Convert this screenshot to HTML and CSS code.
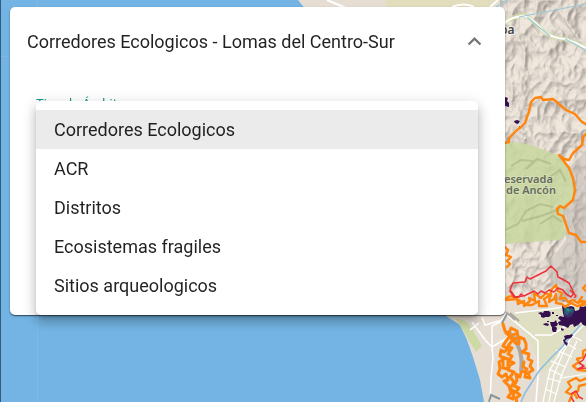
FILE: index.html
```html
<!DOCTYPE html>
<html lang="es">
<head>
<meta charset="utf-8">
<meta name="viewport" content="width=device-width, initial-scale=1">
<title>Corredores Ecologicos</title>
<link rel="stylesheet" href="styles.css">
</head>
<body>
<svg class="map" viewBox="0 0 586 402" preserveAspectRatio="xMinYMin slice" aria-hidden="true">
  <defs>
    <filter id="relief" x="0" y="0" width="100%" height="100%" color-interpolation-filters="sRGB">
      <feTurbulence type="turbulence" baseFrequency="0.04 0.03" numOctaves="3" seed="5"/>
      <feColorMatrix type="matrix" values="0 0 0 0 0  0 0 0 0 0  0 0 0 0 0  -1 0 0 0 1"/>
      <feDiffuseLighting surfaceScale="6" diffuseConstant="1.1" lighting-color="#ece3d9">
        <feDistantLight azimuth="225" elevation="62"/>
      </feDiffuseLighting>
      <feComposite operator="in" in2="SourceGraphic"/>
    </filter>
    <clipPath id="reserve-area"><path d="M505 141L528 144 560 156 569 168 574 185 573 200 563 210 564 225 566 240 505 244Z"/></clipPath>
  </defs>
  <rect width="586" height="402" fill="#73b4e4"/>
  <path d="M298 0L306 10 446 300 446 316 460 325 467 340 473 357 480 380 484 402H586V0Z" fill="#e6ddd3"/>
  <path d="M386 0H500L486 12H386Z" fill="#e2ddbd"/>
  <g filter="url(#relief)" opacity=".42"><path d="M500 0H586V304L545 300 505 296Z" fill="#fff"/></g>
  <path d="M569 168L586 150V300H560L545 268 566 240 563 210 574 200Z" fill="#b5b0aa" opacity=".4"/>
  <path d="M505 141L528 144 560 156 569 168 574 185 573 200 563 210 564 225 566 234 560 240 505 244Z" fill="#c8d79e" opacity=".85"/>
  <g fill="none" stroke="#a5af80" opacity=".55" clip-path="url(#reserve-area)">
    <path stroke-width="2" d="M505 230L518 224 526 211 540 204 553 207M522 221L541 216 560 209M540 224L553 216 562 222M511 166L521 160 533 161M526 169L537 159 551 164M548 178L560 170 566 182"/>
  </g>
  <path d="M505 22Q514 16 525 15Q534 21 543 31Q552 38 565 39Q577 43 586 48" fill="none" stroke="#d7ddae" stroke-width="5" opacity=".7"/>
  <path d="M503 24Q512 16 525 16Q534 20 543 31Q552 38 565 39Q577 43 586 48" fill="none" stroke="#fff" stroke-width="2"/>
  <path d="M496 7L508 0M519 17L545 12 586 4M527 17L540 28 550 36M565 39L577 45 586 51" fill="none" stroke="#9cc8d5" stroke-width="1.2"/>
  <path d="M327 0L346 8M452 7Q464 2 474 7M490 7L498 0" fill="none" stroke="#fff" stroke-width="2"/>
  <path d="M516 313L540 309 586 304V331L568 364 544 376 530 341 512 319Z" fill="#dedfc3"/>
  <path d="M456 319Q468 318 475 334L482 346 476 352Z" fill="#cddaa5"/>
  <path d="M543 402V376L565 344 586 328V402Z" fill="#e4e0d0"/>
  <g fill="none" stroke="#fff" stroke-width="1.6">
    <path d="M472 322L477 329 486 341 492 347 493 358 491 378 490 402M492 347L509 337M482 317L485 325 502 320 506 314M470 330L479 323M507 315L538 341V376L536 402M505 316L500 322 492 326V347M515 313L550 309 586 304M535 335L551 335 577 320M538 341L528 332"/>
    <path stroke-width="1.2" d="M586 323L572 337 560 352 550 370 543 402M577 327L563 353 554 375 549 402M551 361L566 367M549 369L563 376M547 378L561 382M556 350L572 357M562 341L576 349M570 335L582 341M545 389L557 394M566 341L558 357M577 341L561 376 554 402M561 378L586 374"/>
  </g>
  <path d="M506 312L515 320M510 313L519 321" stroke="#aaa9a1" stroke-width="2"/>
  <path d="M509 333Q516 338 518 346Q523 357 521 371" stroke="#aaa9a5" stroke-width="4" fill="none"/>
  <path d="M580 325L562 347 551 358 539 371 532 382 525 393 521 402" fill="none" stroke="#92bfe0" stroke-width="1.7"/>
  <path d="M489 402L491 395 500 399M502 323L507 314" stroke="#8b989b" stroke-width="2" fill="none"/>
  <g fill="#35104f">
    <path d="M505 97l3 1-1 3 2 2v4l-4-1zM514 121l3-1 3 1-2 3-3-1zM519 126l2 1-2 2z"/>
    <path d="M538 313l3-1 2 1 1-2h5l2 2-1 1 1 1-2 2h-4l-1 1-3-1v-2zM543 324l3-1 3 1-1 2-4-1zM550 322l4 0 2-2 1 3h1l-1 3h-3l-1 2-2-2zM552 327l3-1 2 2-1 4-3 0-1-2zM547 321h2v1h-2z"/>
    <path d="M562 306l4-1 1 2 4-1 3 1 1 4 4-1 1-4 3 1 3-1v20l-3-1-2-3-3 3-4 2-1-3-3 1-2 3-4-2-5-1-1-3 3-1-3-3 2-2 4 1-1-4zM567 335l3 0 1-1 2 1-2 3-4 1-2 2 2 2 1-1-1 4-3-3-1-3 2-1-1-3zM552 312h2v2h-2zM556 315h2v1h-2zM561 328l3 1-1 2-2-1z"/>
  </g>
  <path d="M564 307l3 1 3-1 3 2 1 3-2 4-4 2-4-2z" fill="#3b3069"/>
  <path d="M564 308l3-1 2 2 3-1 2 2-2 3-2-1-2 3-3-1z" fill="#285f79"/>
  <path d="M566 309l2-1 2 2-2 2z" fill="#2a8f87"/>
  <g fill="none" stroke="#ff850e" stroke-width="2.4" stroke-linejoin="round" stroke-linecap="round">
    <path d="M504 143L509 142 509 138 517 130 521 127 525 123 527 117 529 112 531 102 535 98 541 97 543 100 553 99 566 110 575 114 581 121 587 125M587 133L583 137 582 145 573 153 569 160 564 159 559 155 569 168 573 178 575 190 573 200 564 208 560 206 557 209 558 214 563 216 569 233 576 235 581 242 587 242"/>
    <path d="M505 247L508 250 506 255 511 257 507 261 510 264 507 267"/>
    <path d="M504 299L511 296 517 298 518 304 524 301 524 306 530 301 529 298 535 301 534 293 541 298 546 293 551 296 551 290 556 285 558 291 562 293 560 299 565 298 568 302 573 300 578 303 581 301 587 302M506 300L517 299 526 305 532 305 539 301 539 306 547 306 544 299 550 295 549 302 554 299 556 294 556 303 562 304 565 307 571 303 577 306 587 304M586 285L583 288 586 291M582 297L579 301 584 304"/>
    <path stroke-width="3" d="M503 324L505 331 509 333 511 328 517 331 518 338 514 339 515 343 519 344 519 337 524 339 526 344 526 349 522 352 529 354 528 359 532 361 530 366 533 370 528 373 530 378 525 377 526 371 521 372 520 377 516 374 517 380 514 386 519 388 516 392 520 395 516 398 517 403M506 333L510 336 506 341 503 346 508 349 504 352 501 350 500 356 504 359 499 362 500 369 498 374 502 377 506 374 508 380 504 381 509 386 511 393 508 397 513 399 514 391 510 389 514 382 510 377 514 372 508 370 510 365 514 363 509 361 512 356 508 354 512 348 508 346 512 341 511 336 515 334M502 357L508 359 508 369 503 368 503 361M524 362L523 367 527 369"/>
    <path d="M587 349L583 351 583 357 577 359 579 362 573 366 578 370 587 371M587 378L580 381 576 378 568 382 571 387 566 392 572 395 569 402M587 384L579 386 578 391 574 393 577 398"/>
  </g>
  <g fill="none" stroke="#ed3039" stroke-width="1.5" stroke-linejoin="round">
    <path d="M511 287L513 283 525 282 527 277 530 279 536 276 546 271 551 266 557 272 558 277 564 280 569 283 574 293 571 297 566 294 563 290 558 288 554 292 549 290 545 293 541 291 538 294 534 291 530 293 524 296 521 294 519 297 514 297 510 291Z"/>
    <path d="M587 352L583 360 579 363 584 366 578 369 587 368M571 394L576 391 579 397 583 399M574 402L571 397M511 291L515 297 523 296M570 290L576 296 574 298"/>
  </g>
  <g class="place">
    <text x="500" y="34">pa</text>
    <text class="reserve"><tspan x="504" y="183">eservada</tspan><tspan x="506" y="194">de Ancón</tspan></text>
  </g>
  <path d="M37.5 0V402M0 56.5H37" stroke="#82bdea" opacity=".6"/>
  <path d="M.5 0V402" stroke="#315b7d"/>
</svg>

<main class="page">
  <section class="panel">
    <h1 class="heading">
      <button class="toggle" type="button" aria-expanded="true" aria-controls="filters">
        <span>Corredores Ecologicos - Lomas del Centro-Sur</span>
        <svg class="chevron" viewBox="0 0 24 24" aria-hidden="true"><path d="M12 8l-6 6 1.41 1.41L12 10.83l4.59 4.58L18 14z"/></svg>
      </button>
    </h1>
    <div class="filters" id="filters">
      <span class="label" id="scope-label">Tipo de Ámbito</span>
      <ul class="menu" role="listbox" aria-labelledby="scope-label">
        <li><button class="option selected" type="button" role="option" aria-selected="true">Corredores Ecologicos</button></li>
        <li><button class="option" type="button" role="option" aria-selected="false">ACR</button></li>
        <li><button class="option" type="button" role="option" aria-selected="false">Distritos</button></li>
        <li><button class="option" type="button" role="option" aria-selected="false">Ecosistemas fragiles</button></li>
        <li><button class="option" type="button" role="option" aria-selected="false">Sitios arqueologicos</button></li>
      </ul>
    </div>
  </section>
</main>
</body>
</html>
```
FILE: styles.css
```css
* {
  box-sizing: border-box;
}

body {
  margin: 0;
  min-height: 100vh;
  overflow: hidden;
  background: #73b4e4;
  color: rgba(0, 0, 0, 0.87);
  font-family: Roboto, "Liberation Sans", sans-serif;
  font-size: 18px;
}

.map {
  position: fixed;
  inset: 0;
  width: 100%;
  height: 100%;
}

.place {
  fill: #444;
  stroke: rgba(255, 255, 255, 0.6);
  stroke-width: 2px;
  paint-order: stroke;
  font-family: "Noto Sans", sans-serif;
  font-size: 12px;
  font-weight: 600;
}

.reserve {
  fill: #666b5e;
  stroke: rgba(220, 228, 190, 0.6);
  font-size: 11px;
}

.page {
  position: relative;
  padding: 7px 81px 8px 10px;
}

.panel {
  border-radius: 5px;
  background: #fff;
  box-shadow: 0 1px 1px rgba(0, 0, 0, 0.5), 0 1px 3px rgba(0, 0, 0, 0.2);
}

.heading {
  margin: 0;
  font-size: 18px;
}

.toggle {
  display: flex;
  align-items: center;
  justify-content: space-between;
  width: 100%;
  height: 69px;
  padding: 0 17px;
  border: 0;
  background: none;
  color: inherit;
  font: inherit;
  font-weight: 400;
  text-align: left;
}

.chevron {
  flex: none;
  width: 27px;
  height: 27px;
  fill: #757575;
}

.filters {
  padding: 19px 27px 0 26px;
}

.label {
  display: block;
  color: #159788;
  font-size: 13px;
  line-height: 18px;
}

.menu {
  position: relative;
  margin: -12px 0 0;
  padding: 9px 0 10px;
  border-radius: 5px;
  background: #fff;
  box-shadow: 0 5px 5px -3px rgba(0, 0, 0, 0.2), 0 8px 10px 1px rgba(0, 0, 0, 0.14), 0 3px 14px 2px rgba(0, 0, 0, 0.12);
  list-style: none;
}

.option {
  display: block;
  width: 100%;
  padding: 6px 18px;
  border: 0;
  background: none;
  color: inherit;
  font: inherit;
  line-height: 27px;
  text-align: left;
}

.selected {
  background: #ebebeb;
}
```
